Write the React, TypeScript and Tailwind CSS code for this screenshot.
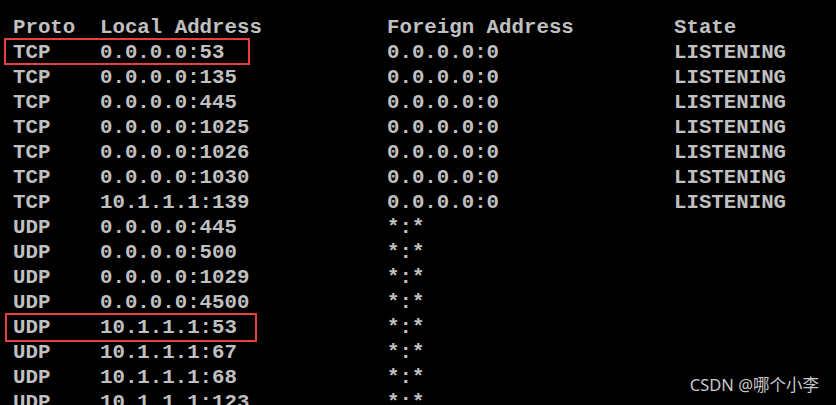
const rows: [string, string, string, string][] = [
  ["Proto", "Local Address", "Foreign Address", "State"],
  ["TCP", "0.0.0.0:53", "0.0.0.0:0", "LISTENING"],
  ["TCP", "0.0.0.0:135", "0.0.0.0:0", "LISTENING"],
  ["TCP", "0.0.0.0:445", "0.0.0.0:0", "LISTENING"],
  ["TCP", "0.0.0.0:1025", "0.0.0.0:0", "LISTENING"],
  ["TCP", "0.0.0.0:1026", "0.0.0.0:0", "LISTENING"],
  ["TCP", "0.0.0.0:1030", "0.0.0.0:0", "LISTENING"],
  ["TCP", "10.1.1.1:139", "0.0.0.0:0", "LISTENING"],
  ["UDP", "0.0.0.0:445", "*:*", ""],
  ["UDP", "0.0.0.0:500", "*:*", ""],
  ["UDP", "0.0.0.0:1029", "*:*", ""],
  ["UDP", "0.0.0.0:4500", "*:*", ""],
  ["UDP", "10.1.1.1:53", "*:*", ""],
  ["UDP", "10.1.1.1:67", "*:*", ""],
  ["UDP", "10.1.1.1:68", "*:*", ""],
  ["UDP", "10.1.1.1:123", "*:*", ""],
]

export default function App() {
  return (
    <div className="relative w-[836px] h-[405px] overflow-hidden bg-black">
      <div className="pl-[13px] pt-[15px] font-['Liberation_Mono',monospace] font-bold text-[20.75px] leading-[25px] text-[#c0c0c0] whitespace-pre">
        {rows.map((r, i) => (
          <div key={i} className="flex h-[25px]">
            <span className="w-[87px]">{r[0]}</span>
            <span className="w-[287px]">{r[1]}</span>
            <span className="w-[287px]">{r[2]}</span>
            <span>{r[3]}</span>
          </div>
        ))}
      </div>

      {/* highlight boxes */}
      <div className="absolute left-[4px] top-[38px] w-[246px] h-[27px] border-2 border-[#e8403c]" />
      <div className="absolute left-[5px] top-[313px] w-[252px] h-[29px] border-2 border-[#e8403c]" />

      <div className="absolute right-[17px] top-[374px] font-['Noto_Sans','Noto_Sans_CJK_SC',sans-serif] text-[16.5px] leading-[22px] text-[#c8c8c8]">
        CSDN @哪个小李
      </div>
    </div>
  )
}
